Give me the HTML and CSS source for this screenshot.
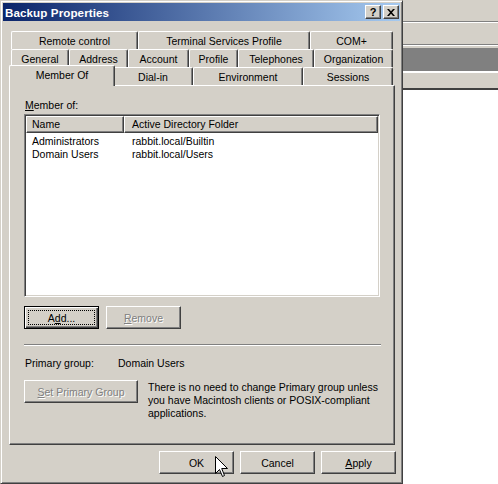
FILE: index.html
```html
<!DOCTYPE html>
<html>
<head>
<meta charset="utf-8">
<link rel="stylesheet" href="styles.css">
</head>
<body>
<div class="desk">
  <div class="window">
    <div class="titlebar">
      <span class="title">Backup Properties</span>
      <div class="tbtns">
        <span class="tbtn help">?</span>
        <span class="tbtn">
          <svg width="8" height="7" viewBox="0 0 8 7"><path d="M0 0h2l2 2.2L6 0h2L5 3.5 8 7H6L4 4.8 2 7H0l3-3.5z" fill="#000"/></svg>
        </span>
      </div>
    </div>
    <div class="tabs">
      <div class="tabrow">
        <div class="tab w127">Remote control</div>
        <div class="tab w172">Terminal Services Profile</div>
        <div class="tab w83">COM+</div>
      </div>
      <div class="tabrow">
        <div class="tab w58">General</div>
        <div class="tab w59">Address</div>
        <div class="tab w61">Account</div>
        <div class="tab w49">Profile</div>
        <div class="tab w76">Telephones</div>
        <div class="tab w79">Organization</div>
      </div>
      <div class="tabrow">
        <div class="tab sel w102">Member Of</div>
        <div class="tab w80">Dial-in</div>
        <div class="tab w110">Environment</div>
        <div class="tab w90">Sessions</div>
      </div>
    </div>
    <div class="panel">
      <div class="label"><u>M</u>ember of:</div>
      <div class="listview">
        <div class="lvhead">
          <div class="hcell hname">Name</div>
          <div class="hcell hfolder">Active Directory Folder</div>
        </div>
        <div class="lvrow"><span class="cname">Administrators</span><span class="cfolder">rabbit.local/Builtin</span></div>
        <div class="lvrow"><span class="cname">Domain Users</span><span class="cfolder">rabbit.local/Users</span></div>
      </div>
      <div class="btnrow">
        <div class="btn focused"><span class="focusring"></span>A<u>d</u>d...</div>
        <div class="btn disabled"><u>R</u>emove</div>
      </div>
      <div class="separator"></div>
      <div class="pgrow">
        <span class="pglabel">Primary group:</span>
        <span class="pgvalue">Domain Users</span>
      </div>
      <div class="setrow">
        <div class="btn disabled wide"><u>S</u>et Primary Group</div>
        <p class="note">There is no need to change Primary group unless<br>you have Macintosh clients or POSIX-compliant<br>applications.</p>
      </div>
    </div>
    <div class="footer">
      <div class="btn">OK</div>
      <div class="btn">Cancel</div>
      <div class="btn"><u>A</u>pply</div>
    </div>
  </div>
  <div class="bg">
    <div class="s gray h21"></div>
    <div class="s dark h1"></div>
    <div class="s white h1"></div>
    <div class="s gray h21"></div>
    <div class="s dark h1"></div>
    <div class="s white h1"></div>
    <div class="s gray h2"></div>
    <div class="s dark h23"></div>
    <div class="s white h2"></div>
    <div class="s gray h15"></div>
    <div class="s black h2"></div>
    <div class="s white fill"></div>
  </div>
  <svg class="cursor" width="13" height="21" viewBox="0 0 13 21">
    <path d="M0.5 0.5V17.5L4.5 13.5L7.5 20.5L9.5 19.5L6.7 12.5H12.5Z" fill="#fff" stroke="#000" stroke-width="1" stroke-linejoin="miter"/>
  </svg>
</div>
</body>
</html>
```

FILE: styles.css
```css
* { box-sizing: border-box; }
body {
  margin: 0;
  font-family: "Liberation Sans", Arial, sans-serif;
  font-size: 10.5px;
  color: #000;
  background: #fff;
}
.desk {
  position: relative;
  display: flex;
  width: 498px;
  height: 484px;
  overflow: hidden;
}
.window {
  width: 403px;
  height: 484px;
  flex: none;
  background: #D4D0C8;
  border: 1px solid;
  border-color: #D4D0C8 #404040 #404040 #D4D0C8;
  box-shadow: inset 1px 1px #fff, inset -1px -1px #808080;
  padding: 2px;
  display: flex;
  flex-direction: column;
}
.titlebar {
  height: 18px;
  flex: none;
  background: linear-gradient(to right, #0A246A, #A6CAF0);
  display: flex;
  align-items: center;
  justify-content: space-between;
  padding: 0 1px 0 2px;
}
.title {
  color: #fff;
  font-weight: bold;
  font-size: 11.6px;
  letter-spacing: 0.1px;
}
.tbtns { display: flex; gap: 2px; }
.tbtn {
  width: 16px;
  height: 14px;
  background: #D4D0C8;
  border: 1px solid;
  border-color: #fff #404040 #404040 #fff;
  box-shadow: inset -1px -1px #808080;
  display: flex;
  align-items: center;
  justify-content: center;
}
.tbtn.help {
  font-weight: bold;
  font-size: 11px;
  line-height: 12px;
}
.tabs {
  margin: 10px 0 0 8px;
  width: 382px;
}
.tabrow {
  display: flex;
  height: 18px;
  align-items: flex-start;
}
.tab {
  height: 18px;
  flex: none;
  background: #D4D0C8;
  border-top: 1px solid #fff;
  border-left: 1px solid #fff;
  border-right: 1px solid #404040;
  box-shadow: inset -1px 0 #808080;
  border-top-left-radius: 2px;
  border-top-right-radius: 2px;
  text-align: center;
  padding-top: 3px;
  line-height: 13px;
  white-space: nowrap;
}
.tab.sel {
  position: relative;
  z-index: 1;
  height: 21px;
  margin: -2px -2px 0 -2px;
  padding-top: 3px;
}
.w127 { width: 127px; }
.w172 { width: 172px; }
.w83 { width: 83px; }
.w58 { width: 58px; }
.w59 { width: 59px; }
.w61 { width: 61px; }
.w49 { width: 49px; }
.w76 { width: 76px; }
.w79 { width: 79px; }
.w102 { width: 106px; }
.w80 { width: 80px; }
.w110 { width: 110px; }
.w90 { width: 90px; }

.panel {
  margin-left: 6px;
  width: 386px;
  height: 360px;
  flex: none;
  border-top: 1px solid #fff;
  border-left: 1px solid #fff;
  border-right: 1px solid #404040;
  border-bottom: 1px solid #404040;
  box-shadow: inset -1px -1px #808080;
  padding: 13px 0 0 14px;
}
.label {
  padding-left: 1px;
  line-height: 13px;
  height: 13px;
}
.listview {
  margin-top: 2px;
  width: 356px;
  height: 183px;
  background: #fff;
  border: 1px solid;
  border-color: #808080 #fff #fff #808080;
  box-shadow: inset 1px 1px #404040, inset -1px -1px #D4D0C8;
  padding: 1px;
}
.lvhead {
  display: flex;
  height: 17px;
}
.hcell {
  height: 17px;
  background: #D4D0C8;
  border: 1px solid;
  border-color: #fff #404040 #404040 #fff;
  box-shadow: inset -1px -1px #808080;
  line-height: 15px;
  white-space: nowrap;
}
.hname { width: 98px; padding-left: 5px; }
.hfolder { flex: 1; padding-left: 7px; }
.lvrow {
  display: flex;
  height: 13px;
  line-height: 13px;
  white-space: nowrap;
}
.lvhead + .lvrow { margin-top: 2px; }
.cname { width: 98px; padding-left: 6px; }
.cfolder { padding-left: 8px; }

.btn {
  position: relative;
  width: 75px;
  height: 23px;
  background: #D4D0C8;
  border: 1px solid;
  border-color: #fff #404040 #404040 #fff;
  box-shadow: inset -1px -1px #808080;
  display: flex;
  align-items: center;
  justify-content: center;
  white-space: nowrap;
  flex: none;
  padding-top: 1px;
}
.btn.focused {
  border-color: #000;
  box-shadow: inset 1px 1px #fff, inset -1px -1px #404040, inset -2px -2px #808080;
}
.focusring {
  position: absolute;
  left: 3px;
  top: 3px;
  right: 3px;
  bottom: 3px;
  border: 1px dotted #000;
}
.btn.disabled {
  color: #808080;
  text-shadow: 1px 1px 0 #fff;
}
.btn.wide { width: 114px; }
.btnrow {
  display: flex;
  gap: 7px;
  margin-top: 9px;
}
.separator {
  margin-top: 15px;
  width: 357px;
  height: 2px;
  border-top: 1px solid #808080;
  border-bottom: 1px solid #fff;
}
.pgrow {
  margin-top: 11px;
  display: flex;
  line-height: 13px;
  padding-left: 1px;
}
.pglabel { width: 93px; }
.setrow {
  margin-top: 10px;
  display: flex;
  align-items: flex-start;
}
.note {
  margin: 0 0 0 10px;
  line-height: 13px;
  padding-top: 1px;
  white-space: nowrap;
}
.footer {
  margin-top: 6px;
  display: flex;
  justify-content: flex-end;
  gap: 6px;
  padding-right: 4px;
}

.bg {
  flex: 1;
  display: flex;
  flex-direction: column;
}
.s { flex: none; }
.gray { background: #D4D0C8; }
.dark { background: #808080; }
.white { background: #fff; }
.black { background: #404040; }
.h1 { height: 1px; }
.h2 { height: 2px; }
.h15 { height: 15px; }
.h21 { height: 21px; }
.h23 { height: 23px; }
.fill { flex: 1; }

.cursor {
  position: absolute;
  left: 215px;
  top: 456px;
}
```
